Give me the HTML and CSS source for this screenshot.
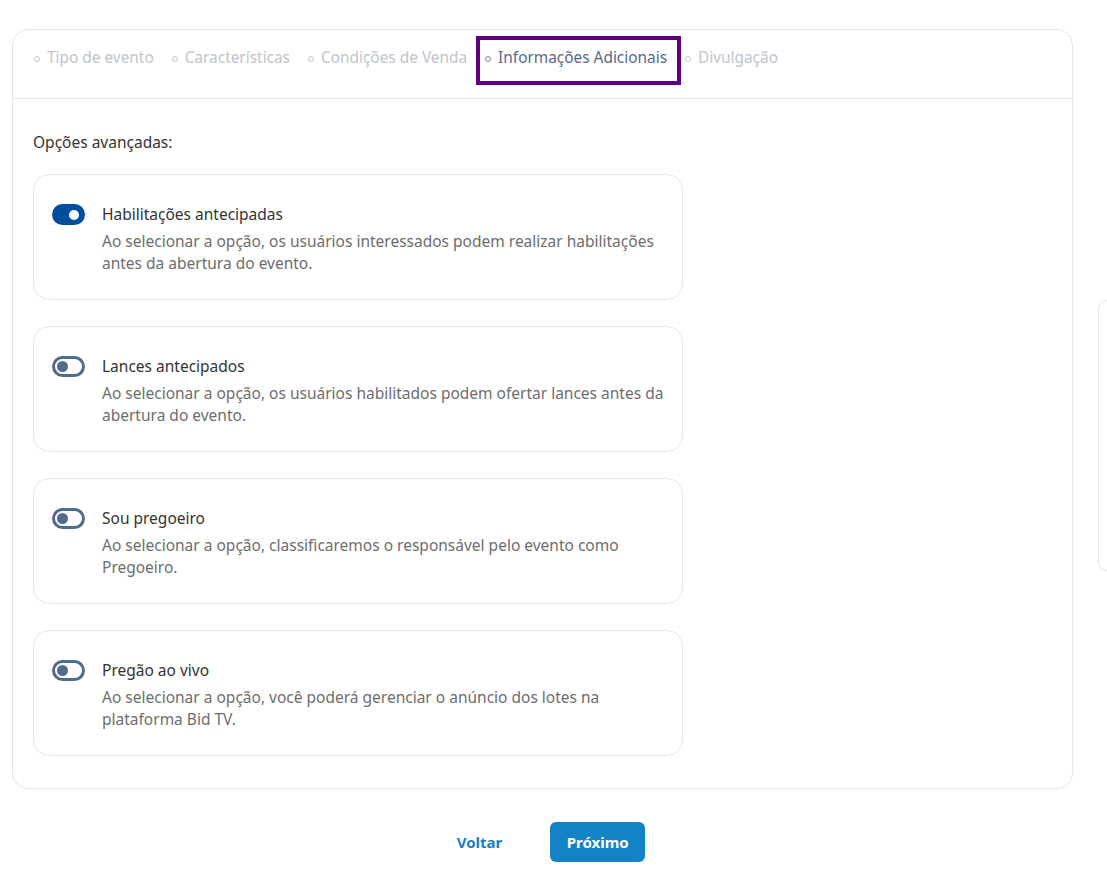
FILE: index.html
```html
<!DOCTYPE html>
<html lang="pt-BR">
<head>
<meta charset="UTF-8" />
<meta name="viewport" content="width=device-width, initial-scale=1" />
<title>Informações Adicionais</title>
<link rel="stylesheet" href="styles.css">
</head>
<body>

<div class="page">
  <div class="main-col">
    <div class="wizard">
      <ul class="steps">
        <li class="step">Tipo de evento</li>
        <li class="step">Características</li>
        <li class="step">Condições de Venda</li>
        <li class="step active">Informações Adicionais</li>
        <li class="step">Divulgação</li>
      </ul>

      <div class="wizard-body">
        <p class="section-label">Opções avançadas:</p>

        <div class="option">
          <span class="switch on"></span>
          <div class="option-text">
            <div class="option-title">Habilitações antecipadas</div>
            <div class="option-desc">Ao selecionar a opção, os usuários interessados podem realizar habilitações antes da abertura do evento.</div>
          </div>
        </div>

        <div class="option">
          <span class="switch"></span>
          <div class="option-text">
            <div class="option-title">Lances antecipados</div>
            <div class="option-desc">Ao selecionar a opção, os usuários habilitados podem ofertar lances antes da abertura do evento.</div>
          </div>
        </div>

        <div class="option">
          <span class="switch"></span>
          <div class="option-text">
            <div class="option-title">Sou pregoeiro</div>
            <div class="option-desc">Ao selecionar a opção, classificaremos o responsável pelo evento como Pregoeiro.</div>
          </div>
        </div>

        <div class="option">
          <span class="switch"></span>
          <div class="option-text">
            <div class="option-title">Pregão ao vivo</div>
            <div class="option-desc">Ao selecionar a opção, você poderá gerenciar o anúncio dos lotes na plataforma Bid TV.</div>
          </div>
        </div>
      </div>
    </div>

    <div class="actions">
      <button class="btn btn-link">Voltar</button>
      <button class="btn btn-primary">Próximo</button>
    </div>
  </div>

  <aside class="side-card"></aside>
</div>

</body>
</html>
```

FILE: styles.css
```css
html, body {
  margin: 0;
  overflow: hidden;
}
body {
  font-family: "Noto Sans", "Open Sans", sans-serif;
  background: #fff;
  color: #333;
}
.page {
  display: flex;
  align-items: flex-start;
  gap: 25px;
  padding: 29px 0 0 12px;
}
.main-col {
  width: 1061px;
  flex-shrink: 0;
}
.wizard {
  border: 1px solid #e6e6e6;
  border-radius: 16px;
}

/* steps */
.steps {
  list-style: none;
  margin: 0;
  padding: 17px 21px 0;
  height: 51px;
  display: flex;
  align-items: flex-start;
  gap: 18px;
  border-bottom: 1px solid #e6e6e6;
  font-size: 15.4px;
  line-height: 22px;
  color: #c0c4cc;
}
.step {
  display: flex;
  align-items: center;
  gap: 7px;
}
.step::before {
  content: "";
  width: 4px;
  height: 4px;
  margin-top: 1px;
  border: 1.8px solid #c0c4cc;
  border-radius: 50%;
}
.step.active {
  color: #56698a;
  position: relative;
}
.step.active::before {
  border-color: #7b8aa0;
}
.step.active::after {
  content: "";
  position: absolute;
  left: -9px;
  right: -14px;
  top: -11px;
  bottom: -16px;
  border: 4px solid #5f0080;
}

/* body */
.wizard-body {
  padding: 32px 20px 32px 20px;
}
.section-label {
  margin: 0 0 21px;
  font-size: 15.5px;
  line-height: 22px;
  color: #333;
}
.option {
  display: flex;
  align-items: flex-start;
  gap: 17px;
  width: 616px;
  border: 1px solid #e8e8e8;
  border-radius: 16px;
  padding: 28px 14px 25px 18px;
  margin-bottom: 26px;
}
.option:last-child {
  margin-bottom: 0;
}
.switch {
  flex-shrink: 0;
  position: relative;
  box-sizing: border-box;
  width: 33px;
  height: 21px;
  margin-top: 1px;
  border: 3px solid #506b8b;
  border-radius: 11px;
  background: #fff;
}
.switch::after {
  content: "";
  position: absolute;
  left: 2px;
  top: 2px;
  width: 11px;
  height: 11px;
  border-radius: 50%;
  background: #506b8b;
}
.switch.on {
  background: #004f9e;
  border-color: #004f9e;
}
.switch.on::after {
  left: auto;
  right: 3px;
  top: 2.5px;
  width: 10px;
  height: 10px;
  background: #fff;
}
.option-title {
  font-size: 15.5px;
  line-height: 22px;
  color: #333;
}
.option-desc {
  margin-top: 5px;
  font-size: 15.5px;
  line-height: 22px;
  color: #6d6d6d;
}

/* footer buttons */
.actions {
  display: flex;
  justify-content: center;
  gap: 31px;
  margin-top: 33px;
}
.btn {
  font-family: inherit;
  font-size: 15px;
  font-weight: 700;
  height: 40px;
  border: none;
  border-radius: 6px;
  cursor: pointer;
}
.btn-link {
  background: none;
  color: #1a7ec2;
  padding: 0 17px;
}
.btn-primary {
  background: #1483c6;
  color: #fff;
  width: 95px;
}

.side-card {
  flex-shrink: 0;
  width: 8px;
  height: 269px;
  margin-top: 271px;
  border: 1px solid #e6e6e6;
  border-right: none;
  border-radius: 16px 0 0 16px;
}
```
